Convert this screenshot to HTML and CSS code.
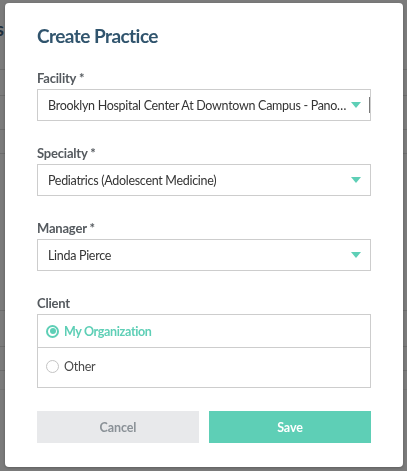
FILE: index.html
```html
<!DOCTYPE html>
<html lang="en">
<head>
<meta charset="utf-8">
<title>Create Practice</title>
<link rel="stylesheet" href="styles.css">
</head>
<body>
<div class="page">
  <div class="page-row r1"><span class="page-glyph">s</span></div>
  <div class="page-row r2"></div>
  <div class="page-row r3"></div>
  <div class="page-row r4"></div>
  <div class="page-row r5"></div>
  <div class="page-row r6"></div>
  <div class="page-row r7"></div>
  <div class="page-row r8"></div>
</div>

<div class="modal">
  <h1 class="modal-title">Create Practice</h1>

  <div class="field">
    <label class="field-label">Facility *</label>
    <div class="select">
      <span class="select-text">Brooklyn Hospital Center At Downtown Campus - Pano…</span>
      <span class="select-arrow"></span>
      <span class="select-bar"></span>
    </div>
  </div>

  <div class="field">
    <label class="field-label">Specialty *</label>
    <div class="select">
      <span class="select-text">Pediatrics (Adolescent Medicine)</span>
      <span class="select-arrow"></span>
    </div>
  </div>

  <div class="field">
    <label class="field-label">Manager *</label>
    <div class="select">
      <span class="select-text">Linda Pierce</span>
      <span class="select-arrow"></span>
    </div>
  </div>

  <div class="field">
    <label class="field-label">Client</label>
    <div class="radio-group">
      <div class="radio-row radio-row-first checked">
        <span class="radio"></span>
        <span class="radio-text">My Organization</span>
      </div>
      <div class="radio-row radio-row-second">
        <span class="radio"></span>
        <span class="radio-text">Other</span>
      </div>
    </div>
  </div>

  <div class="actions">
    <button class="btn btn-cancel">Cancel</button>
    <button class="btn btn-save">Save</button>
  </div>
</div>
</body>
</html>
```

FILE: styles.css
```css
* { box-sizing: border-box; }

html, body {
  margin: 0;
  padding: 0;
}

body {
  background: #7b7b7b;
  font-family: Lato, "Noto Sans", sans-serif;
  width: 407px;
  height: 471px;
  overflow: hidden;
}

/* dimmed page behind the dialog */
.page {
  display: flex;
  flex-direction: column;
}
.page-row {
  border-bottom: 1px solid #6c6c6c;
}
.r1 { height: 70px; }
.r2 { height: 26px; }
.r3 { height: 34px; }
.r4 { height: 24px; }
.r5 { height: 157px; }
.r6 { height: 36px; }
.r7 { height: 24px; }
.r8 { height: 19px; border-bottom-color: #747474; }

.page-glyph {
  display: block;
  padding-top: 18px;
  margin-left: -4px;
  font-size: 18px;
  font-weight: 700;
  color: #1f2f3c;
}

/* dialog */
.modal {
  position: fixed;
  top: 3px;
  left: 5px;
  width: 398px;
  background: #fff;
  border-radius: 4px;
  padding: 21px 32px 24px 32px;
  box-shadow: 0 1px 3px rgba(0, 0, 0, 0.25);
}

.modal-title {
  margin: 0 0 22px 0;
  font-size: 19px;
  line-height: 24px;
  font-weight: 700;
  letter-spacing: -0.55px;
  color: #30546d;
}

.field {
  margin-bottom: 24px;
}

.field-label {
  display: block;
  font-size: 13px;
  line-height: 16px;
  font-weight: 700;
  letter-spacing: -0.2px;
  color: #555a5f;
  margin-bottom: 3px;
}

.select {
  position: relative;
  display: flex;
  align-items: center;
  height: 32px;
  border: 1px solid #cdcdcd;
  padding: 0 9px 0 10px;
}

.select-text {
  flex: 1;
  min-width: 0;
  font-size: 12.5px;
  letter-spacing: -0.3px;
  color: #343434;
  white-space: nowrap;
  overflow: hidden;
  text-overflow: ellipsis;
}

.select-arrow {
  flex: none;
  width: 0;
  height: 0;
  margin-left: 3px;
  border-left: 5px solid transparent;
  border-right: 5px solid transparent;
  border-top: 6px solid #5ecfb6;
}

.select-bar {
  position: absolute;
  right: 0;
  top: 7px;
  width: 1px;
  height: 16px;
  background: #7a7a7a;
}

.radio-group {
  border: 1px solid #cdcdcd;
}

.radio-row {
  display: flex;
  align-items: center;
  gap: 5px;
  padding: 0 8px;
}
.radio-row-first {
  height: 33px;
  border-bottom: 1px solid #cdcdcd;
}
.radio-row-second {
  height: 39px;
  padding-bottom: 2px;
}

.radio {
  width: 13px;
  height: 13px;
  border-radius: 50%;
  border: 1px solid #c4c4c4;
  background: #fff;
  position: relative;
  flex: none;
}
.checked .radio {
  border: 2px solid #5ecfb6;
}
.checked .radio::after {
  content: "";
  position: absolute;
  left: 1.5px;
  top: 1.5px;
  width: 6px;
  height: 6px;
  border-radius: 50%;
  background: #5ecfb6;
}

.radio-text {
  font-size: 12.5px;
  letter-spacing: -0.25px;
  color: #4a4a4a;
}
.checked .radio-text {
  color: #5ecfb6;
  font-weight: 700;
  letter-spacing: -0.35px;
}

.actions {
  display: flex;
  gap: 10px;
  margin-top: -1px;
}

.btn {
  flex: 1;
  height: 32px;
  border: none;
  font-family: Lato, "Noto Sans", sans-serif;
  font-size: 12.5px;
  font-weight: 700;
  letter-spacing: -0.1px;
  cursor: pointer;
}
.btn-cancel {
  background: #e8e9eb;
  color: #8a9197;
}
.btn-save {
  background: #5ecfb6;
  color: #fff;
}
```
